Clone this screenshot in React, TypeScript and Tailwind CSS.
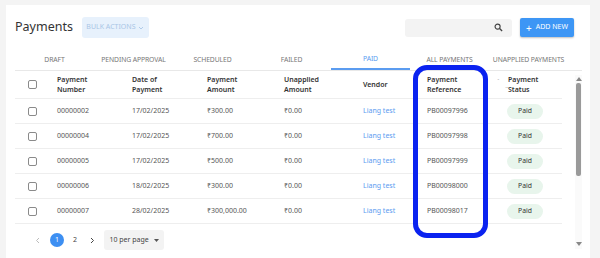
import React from "react";

const rows = [
  ["00000002", "17/02/2025", "₹300.00", "₹0.00", "PB00097996"],
  ["00000004", "17/02/2025", "₹700.00", "₹0.00", "PB00097998"],
  ["00000005", "17/02/2025", "₹500.00", "₹0.00", "PB00097999"],
  ["00000006", "18/02/2025", "₹300.00", "₹0.00", "PB00098000"],
  ["00000007", "28/02/2025", "₹300,000.00", "₹0.00", "PB00098017"],
];

const tabs = ["DRAFT", "PENDING APPROVAL", "SCHEDULED", "FAILED", "PAID", "ALL PAYMENTS", "UNAPPLIED PAYMENTS"];

const cols = "grid grid-cols-[35px_75px_75px_77px_79px_64px_81px_61px]";

function Checkbox() {
  return (
    <div className="flex items-center justify-center">
      <div className="w-[9px] h-[9px] border border-[#8a8a8a] rounded-[2px] bg-white" />
    </div>
  );
}

export default function App() {
  return (
    <div
      className="relative w-[600px] h-[258px] bg-[#f4f4f4] overflow-hidden pt-[5px]"
      style={{ fontFamily: '"Noto Sans", "Open Sans", sans-serif' }}
    >
      <div className="ml-[6px] w-[584px] h-[253px] bg-white pt-[12px]">
        {/* header */}
        <div className="flex items-center h-[21px] pl-[9px] pr-[16px]">
          <div className="text-[12.5px] text-[#333] leading-none">Payments</div>
          <div className="ml-[9px] h-[21px] w-[67px] bg-[#e7f1fc] rounded-[3px] flex items-center justify-center gap-[3px] text-[7px] text-[#a9c6e6]">
            BULK ACTIONS
            <svg width="6" height="4" viewBox="0 0 6 4"><path d="M1 1l2 2 2-2" stroke="#a9c6e6" fill="none" strokeWidth="0.9" /></svg>
          </div>
          <div className="flex-1" />
          <div className="w-[107px] h-[18px] bg-[#f3f3f3] rounded-[3px] flex items-center justify-end pr-[9px]">
            <svg width="9" height="9" viewBox="0 0 10 10"><circle cx="4" cy="4" r="2.8" stroke="#444" strokeWidth="1.3" fill="none" /><path d="M6.2 6.2L9 9" stroke="#444" strokeWidth="1.5" /></svg>
          </div>
          <div className="ml-[8px] w-[54px] h-[19px] bg-[#3d96f5] rounded-[2px] shadow-[0_1px_2px_rgba(0,0,0,0.25)] flex items-center justify-center gap-[4px] text-white text-[7px]">
            <span className="text-[10px] leading-none">+</span>
            <span>ADD NEW</span>
          </div>
        </div>

        {/* tabs */}
        <div className="flex ml-[9px] mt-[12px] h-[20px]">
          {tabs.map((t) => (
            <div
              key={t}
              className={
                "w-[79px] flex items-center justify-center text-[6.8px] tracking-[-0.1px] " +
                (t === "PAID" ? "text-[#5b9cf0] border-b-2 border-[#5b9cf0]" : "text-[#777]")
              }
            >
              {t}
            </div>
          ))}
        </div>

        {/* table area */}
        <div className="flex ml-[9px] border-t border-[#e8e8e8] w-[567px]">
          <div className="w-[547px] text-[7px] text-[#444]">
            <div className={cols + " h-[28px] items-center border-b border-[#eee] font-semibold text-[#333] leading-[10px]"}>
              <Checkbox />
              <div className="pl-[7px]">Payment<br />Number</div>
              <div className="pl-[7px]">Date of<br />Payment</div>
              <div className="pl-[7px]">Payment<br />Amount</div>
              <div className="pl-[7px]">Unapplied<br />Amount</div>
              <div className="pl-[7px]">Vendor</div>
              <div className="pl-[7px] relative">
                Payment<br />Reference
                <span className="absolute right-[2px] top-[2px] text-[5px] text-[#aaa] leading-none">-</span>
                <span className="absolute right-[-8px] top-[9px] text-[5px] text-[#bbb] leading-none">⠤</span>
              </div>
              <div className="pl-[7px]">Payment<br />Status</div>
            </div>
            {rows.map((r) => (
              <div key={r[0]} className={cols + " h-[25px] items-center border-b border-[#eee]"}>
                <Checkbox />
                <div className="pl-[7px] text-[#555]">{r[0]}</div>
                <div className="pl-[7px] text-[#555]">{r[1]}</div>
                <div className="pl-[7px] text-[#555]">{r[2]}</div>
                <div className="pl-[7px] text-[#555]">{r[3]}</div>
                <div className="pl-[7px] text-[#5b9cf0]">Liang test</div>
                <div className="pl-[7px] text-[#555]">{r[4]}</div>
                <div className="pl-[6px]">
                  <div className="w-[36px] h-[15px] rounded-full bg-[#e8f5ec] flex items-center justify-center text-[6.8px] text-[#333]">Paid</div>
                </div>
              </div>
            ))}
            {/* pagination */}
            <div className="flex items-center h-[20px] mt-[6px] pl-[20px]">
              <svg width="6" height="7" viewBox="0 0 6 7"><path d="M4 1L1.5 3.5 4 6" stroke="#bbb" fill="none" strokeWidth="1" /></svg>
              <div className="ml-[9px] w-[14px] h-[14px] rounded-full bg-[#3d8ff2] text-white flex items-center justify-center text-[7px]">1</div>
              <div className="ml-[9px] text-[7px] text-[#444]">2</div>
              <svg className="ml-[12px]" width="6" height="7" viewBox="0 0 6 7"><path d="M2 1l2.5 2.5L2 6" stroke="#444" fill="none" strokeWidth="1" /></svg>
              <div className="ml-[9px] w-[60px] h-[20px] bg-[#f3f3f3] rounded-[3px] flex items-center justify-center gap-[5px] text-[7px] text-[#444]">
                10 per page
                <svg width="5" height="3" viewBox="0 0 5 3"><path d="M0 0h5L2.5 3z" fill="#555" /></svg>
              </div>
            </div>
          </div>
          {/* scrollbar */}
          <div className="ml-[13px] w-[7px] mt-[4px] h-[174px] bg-[#fafafa] flex flex-col items-center">
            <svg className="mt-[2px]" width="6" height="4" viewBox="0 0 6 4"><path d="M0 4h6L3 0z" fill="#888" /></svg>
            <div className="mt-[2px] w-[5px] h-[93px] bg-[#9a9a9a] rounded-[2px]" />
            <div className="flex-1" />
            <svg className="mb-[3px]" width="6" height="4" viewBox="0 0 6 4"><path d="M0 0h6L3 4z" fill="#888" /></svg>
          </div>
        </div>
      </div>

      {/* annotation */}
      <div className="absolute left-[413px] top-[65px] w-[75px] h-[173px] border-[5px] border-[#0a22f0] rounded-[14px]" />
    </div>
  );
}
